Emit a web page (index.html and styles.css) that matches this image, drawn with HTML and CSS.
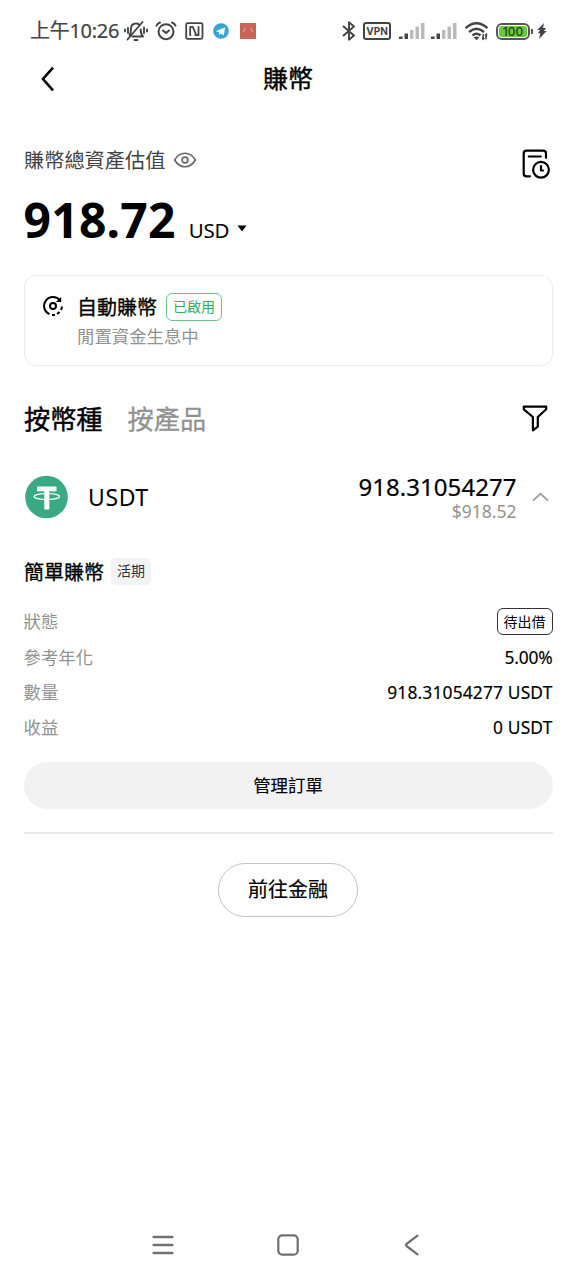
FILE: index.html
```html
<!DOCTYPE html>
<html lang="zh-Hant">
<head>
<meta charset="utf-8">
<title>賺幣</title>
<link rel="stylesheet" href="styles.css">
</head>
<body>
<div class="screen">
  <div class="status">
    <span class="time">上午10:26</span>
    <svg class="mute" width="24" height="22" viewBox="0 0 24 22" fill="none" stroke="#444" stroke-width="1.900" stroke-linecap="round" stroke-linejoin="round"><path d="M8.500 16.500H19c-2-2-2.300-4-2.300-7M5.500 15c1.500-2 1.500-4 1.500-6C7 5.500 9 3.500 12 3.500c1.500 0 2.500.4 3.300 1.200M3.500 19.500L18.500 2M10.500 20h3M4 8v5M1 9.500v2M20 7.500v5.500M23 9.500v2"/></svg>
    <svg class="alarm" width="22" height="20" viewBox="0 0 22 20" fill="none" stroke="#444" stroke-width="2" stroke-linecap="round" stroke-linejoin="round"><circle cx="11" cy="10.700" r="7.500"/><path d="M8 9.500l3 2.500 3-2.500M1.500 4.700Q2.500 2.500 5 1.500M20.500 4.700Q19.500 2.500 17 1.500"/></svg>
    <svg class="nfc" width="19" height="18" viewBox="0 0 19 18" fill="none" stroke="#444" stroke-width="1.800" stroke-linejoin="round"><rect x="1.200" y="1.200" width="16.300" height="15.600" rx="1.500"/><path d="M5.200 14V4.900h2.600l3.200 7.600M9.500 13.200h4V4.200"/></svg>
    <svg class="tele" width="16" height="16" viewBox="0 0 16 16"><circle cx="8" cy="8" r="7.800" fill="#36a4d5"/><path d="M2.800 8.300l9.400-4-1.400 8.200-3-2-1.600 1.400-.3-2.800z" fill="#fff"/></svg>
    <svg class="redapp" width="16" height="16" viewBox="0 0 16 16"><path fill="#c9635b" d="M0 0h16v16H0z"/><path d="M3.500 9l2-4.500M12.500 9l-2-4.500" fill="none" stroke="#e5aaa2"/></svg>
    <span class="grow"></span>
    <svg class="bt" width="14" height="20" viewBox="0 0 14 20" fill="none" stroke="#444" stroke-width="1.900" stroke-linejoin="round"><path d="M1 5l11 9.500-5 4.200V1.300l5 4.200L1 15"/></svg>
    <span class="vpn">VPN</span>
    <svg class="sig" width="26" height="18" viewBox="0 0 26 18"><path fill="#444" d="M0 14.500h3.500V17H0zM5.500 11.500H9V17H5.500z"/><path fill="#bbb" d="M11 8h3.500v9H11zM16.500 4.500H20V17h-3.500zM22 1h3.500v16H22z"/></svg>
    <svg class="sig second" width="26" height="18" viewBox="0 0 26 18"><path fill="#444" d="M0 14.500h3.500V17H0zM5.500 11.500H9V17H5.500z"/><path fill="#bbb" d="M11 8h3.500v9H11zM16.500 4.500H20V17h-3.500zM22 1h3.500v16H22z"/></svg>
    <svg class="wifi" width="26" height="20" viewBox="0 0 26 20"><path d="M1.500 7.200Q12.500-2.800 23.500 7.200M5 11q7.500-6.500 15 0M8.500 14.500q4-3.300 8 0" fill="none" stroke="#444" stroke-width="2.400"/><path fill="#444" d="M9.700 16.300q2.800-1.500 5.600 0l-2.800 3zM18.500 13h1.400v4h1.200l-2.100 2.500-1-1.200zM22.600 18.500h-1.300v-4h-1l2-2.500 1 1.200z"/></svg>
    <span class="battery"><span class="charge">100</span></span>
    <span class="cap"></span>
    <svg class="bolt" width="10" height="16" viewBox="0 0 10 16"><path fill="#444" d="M7 0L.3 7h3L.8 10.300h2.500L2 16l7.700-8H6.800l2.400-3H6z"/></svg>
  </div>

  <header class="header">
    <svg class="back" width="16" height="26" viewBox="0 0 16 26" fill="none" stroke="#000" stroke-width="2.600"><path d="M14 1.700L4 13l10 11.300"/></svg>
    <h1 class="title">賺幣</h1>
  </header>

  <main class="main">
    <section class="assets">
      <div class="assets-text">
        <div class="assets-label"><span>賺幣總資產估值</span>
          <svg class="eye" width="24" height="18" viewBox="0 0 24 18" fill="none" stroke="#666" stroke-width="1.600"><path d="M1.600 9C4 5 7.500 2.300 12 2.300S20 5 22.400 9C20 13 16.500 15.700 12 15.700S4 13 1.600 9z"/><circle cx="12" cy="9" r="2.900"/></svg>
        </div>
        <div class="balance"><span class="amount">918.72</span><span class="unit">USD</span><svg class="caret" width="10" height="7" viewBox="0 0 10 7"><path d="M.5.500h9L5 6.500z"/></svg></div>
      </div>
      <svg class="history" width="29" height="30" viewBox="0 0 29 30" fill="none" stroke="#000" stroke-width="2.200" stroke-linecap="round" stroke-linejoin="round"><path d="M24 8.800V4.500a2.800 2.800 0 0 0-2.800-2.800H4.500a2.800 2.800 0 0 0-2.800 2.800v20a2.800 2.800 0 0 0 2.800 2.800H8M6.800 7.500h12"/><circle cx="19" cy="20.800" r="7.900"/><path d="M19 17v4.500h2"/></svg>
    </section>

    <section class="card">
      <svg class="auto" width="22" height="22" viewBox="0 0 22 22" fill="none" stroke="#000" stroke-width="2"><circle cx="11" cy="11" r="3"/><path d="M7.500 19.200A9 9 0 1 1 18 5.200M10 20a9 9 0 0 0 3-.3M15 18.900a9 9 0 0 0 2.500-2.100M19 15a9 9 0 0 0 1-3.500"/><path d="M19.200 2V7h-5.300z" fill="#000" stroke="none"/></svg>
      <div class="card-body">
        <div class="card-title"><span class="medium">自動賺幣</span><span class="tag-green">已啟用</span></div>
        <div class="card-sub">閒置資金生息中</div>
      </div>
    </section>

    <nav class="tabs">
      <span class="tab active">按幣種</span><span class="tab">按產品</span>
      <span class="grow"></span>
      <svg class="filter" width="26" height="27" viewBox="0 0 26 27" fill="none" stroke="#000" stroke-width="2.200" stroke-linejoin="round"><path d="M1.800 1.700h22.400v2.600L15.800 12v9.600l-4.900 3.800V12L1.800 4.300z"/></svg>
    </nav>

    <section class="coin">
      <svg class="logo" width="44" height="44" viewBox="0 0 44 44"><circle cx="22.500" cy="22" r="21.300" fill="#3aaa85"/><path fill="#fff" d="M13 11.500h19.500v4.800h-7.200V34.500h-5V16.300H13z"/><ellipse cx="22.800" cy="21.500" rx="12.800" ry="3" fill="none" stroke="#fff" stroke-width="1.200"/></svg>
      <span class="coin-name">USDT</span>
      <span class="grow"></span>
      <div class="coin-values"><span class="coin-amount">918.31054277</span><span class="coin-usd">$918.52</span></div>
      <svg class="up" width="17" height="10" viewBox="0 0 17 10" fill="none" stroke="#999" stroke-width="1.700"><path d="M1 8.700l7.500-7 7.500 7"/></svg>
    </section>

    <div class="product"><span class="medium">簡單賺幣</span><span class="tag-gray">活期</span></div>
    <dl class="details">
      <div class="row"><dt>狀態</dt><dd class="tag-outline">待出借</dd></div>
      <div class="row"><dt>參考年化</dt><dd class="rate">5.00%</dd></div>
      <div class="row"><dt>數量</dt><dd>918.31054277 USDT</dd></div>
      <div class="row"><dt>收益</dt><dd>0 USDT</dd></div>
    </dl>
    <button class="manage">管理訂單</button>
    <hr class="divider">
    <button class="finance">前往金融</button>
  </main>

  <footer class="sysnav">
    <svg width="22" height="22" viewBox="0 0 22 22" stroke="#707070" stroke-width="2.300" stroke-linecap="round"><path d="M1.500 3h19M1.500 11h19M1.500 19h19"/></svg>
    <svg width="22" height="22" viewBox="0 0 22 22" fill="none" stroke="#707070" stroke-width="2.200"><rect x="1.300" y="1.300" width="19.400" height="19.400" rx="4"/></svg>
    <svg width="22" height="22" viewBox="0 0 22 22" fill="none" stroke="#707070" stroke-width="2.200" stroke-linecap="round" stroke-linejoin="round"><path d="M16.500 1.700L5.500 10q-1.200 1 0 2l11 8.300"/></svg>
  </footer>
</div>
</body>
</html>
```

FILE: styles.css
```css
* { box-sizing: border-box; }
body { margin: 0; background: #fff; color: #000; font-family: "Noto Sans", "Noto Sans CJK TC", sans-serif; }
svg { display: block; flex: none; }
h1, dl, dd { margin: 0; }
button { font-family: inherit; color: #000; padding: 0 0 2px; }
.screen { width: 576px; height: 1280px; display: flex; flex-direction: column; overflow: hidden; }
.grow { flex: 1; }
.medium { -webkit-text-stroke: .3px #000; }

.status { height: 62px; padding: 0 29px 0 30px; display: flex; align-items: center; flex: none; }
.time { font-size: 20px; color: #444; line-height: 30px; width: 90px; white-space: nowrap; letter-spacing: -.3px; -webkit-text-stroke: .2px #444; }
.mute { margin-left: 4px; }
.alarm { margin-left: 7px; }
.nfc { margin-left: 8px; }
.tele { margin-left: 9px; }
.redapp { margin-left: 11px; }
.vpn { width: 28px; height: 18px; margin: 0 8px 0 7px; border: 2px solid #444; border-radius: 3px; font: 700 10px/14px Inter, sans-serif; color: #444; text-align: center; }
.sig.second { margin-left: 6px; }
.wifi { margin-left: 7px; }
.battery { width: 34px; height: 17px; margin-left: 6px; padding: 1px; border: 2px solid #555; border-radius: 6px; }
.charge { display: block; height: 11px; border-radius: 3px; background: #68c93b; font: 500 12px/11px Inter, sans-serif; color: #234713; text-align: center; }
.cap { width: 2px; height: 5px; margin: 0 4px 0 1px; background: #555; }

.header { height: 34px; padding: 0 39px; display: grid; grid-template-columns: 60px 1fr 60px; align-items: center; flex: none; }
.title { font-size: 25px; line-height: 32px; padding-bottom: 2px; font-weight: 400; text-align: center; -webkit-text-stroke: .4px #000; }

.main { padding: 48px 23.500px 0; flex: 1; display: flex; flex-direction: column; }
.assets { display: flex; justify-content: space-between; height: 131px; }
.assets-label { display: flex; align-items: center; height: 32px; gap: 8px; padding-left: .5px; font-size: 20.200px; color: #444; }
.assets-label span { line-height: 28px; padding-bottom: 1px; }
.balance { display: flex; align-items: baseline; height: 68px; margin-top: 10px; line-height: 68px; }
.amount { font-size: 48px; font-weight: 700; letter-spacing: .25px; }
.unit { font-size: 20.500px; margin-left: 13px; letter-spacing: -.3px; }
.caret { margin-left: 8px; position: relative; top: -6px; }
.history { margin: 5px 2px 0 0; }

.card { height: 91px; display: flex; padding: 15px 17.500px; border: 1.500px solid #ebebeb; border-radius: 12px; }
.auto { margin-top: 4px; }
.card-body { margin-left: 13px; }
.card-title { display: flex; align-items: center; height: 31px; gap: 9px; font-size: 20px; }
.tag-green { width: 56px; height: 28px; border: 1px solid #68c58c; border-radius: 6px; font-size: 14px; line-height: 25px; text-align: center; color: #2eae60; }
.card-sub { font-size: 17.400px; line-height: 28px; color: #929292; }

.tabs { height: 44px; margin-top: 30px; padding-left: .5px; display: flex; align-items: center; font-size: 26.200px; }
.tab { color: #929292; margin-right: 25px; -webkit-text-stroke: .3px #929292; }
.tab.active { color: #000; -webkit-text-stroke: .4px #000; }
.filter { margin-right: 5px; }

.coin { height: 54px; margin-top: 30px; padding-left: .5px; display: flex; align-items: center; }
.coin-name { margin-left: 20px; font-size: 23px; letter-spacing: .6px; }
.coin-values { display: flex; flex-direction: column; align-items: flex-end; }
.coin-amount { font-size: 24px; line-height: 27px; letter-spacing: .05px; -webkit-text-stroke: .2px #000; }
.coin-usd { font-size: 17.500px; line-height: 22px; color: #929292; }
.up { margin: 0 4px 0 15px; }

.product { height: 28px; margin-top: 33px; display: flex; align-items: center; gap: 7px; font-size: 20px; padding-left: .5px; }
.tag-gray { width: 40px; height: 27px; border-radius: 5px; background: #f3f3f3; font-size: 14px; line-height: 26px; text-align: center; color: #333; }
.details { margin-top: 17px; font-size: 17.400px; }
.row { display: flex; justify-content: space-between; align-items: center; height: 34.900px; }
.row:first-child { height: 38px; }
.row dt { color: #929292; line-height: 24px; padding-bottom: 1px; }
.row dd { font-size: 17.400px; line-height: 24px; padding-bottom: 1px; letter-spacing: .15px; -webkit-text-stroke: .15px #000; }
.row .tag-outline { width: 56px; height: 27px; border: 1px solid #333; border-radius: 6px; font-size: 14px; line-height: 25px; text-align: center; letter-spacing: 0; -webkit-text-stroke: 0; }
.row .rate { letter-spacing: -.2px; }
.manage { height: 47px; margin-top: 17.300px; flex: none; border: 0; border-radius: 24px; background: #f2f2f2; font-size: 17.400px; -webkit-text-stroke: .15px #000; }
.divider { width: 100%; height: 1.500px; margin: 23.500px 0 29px; border: 0; background: #e9e9e9; flex: none; }
.finance { align-self: center; width: 140px; height: 54px; flex: none; border: 1px solid #c4c4c4; border-radius: 27px; background: #fff; font-size: 20px; -webkit-text-stroke: .2px #000; }

.sysnav { height: 70px; padding: 0 153px 0 152px; display: flex; justify-content: space-between; align-items: center; flex: none; }
```
